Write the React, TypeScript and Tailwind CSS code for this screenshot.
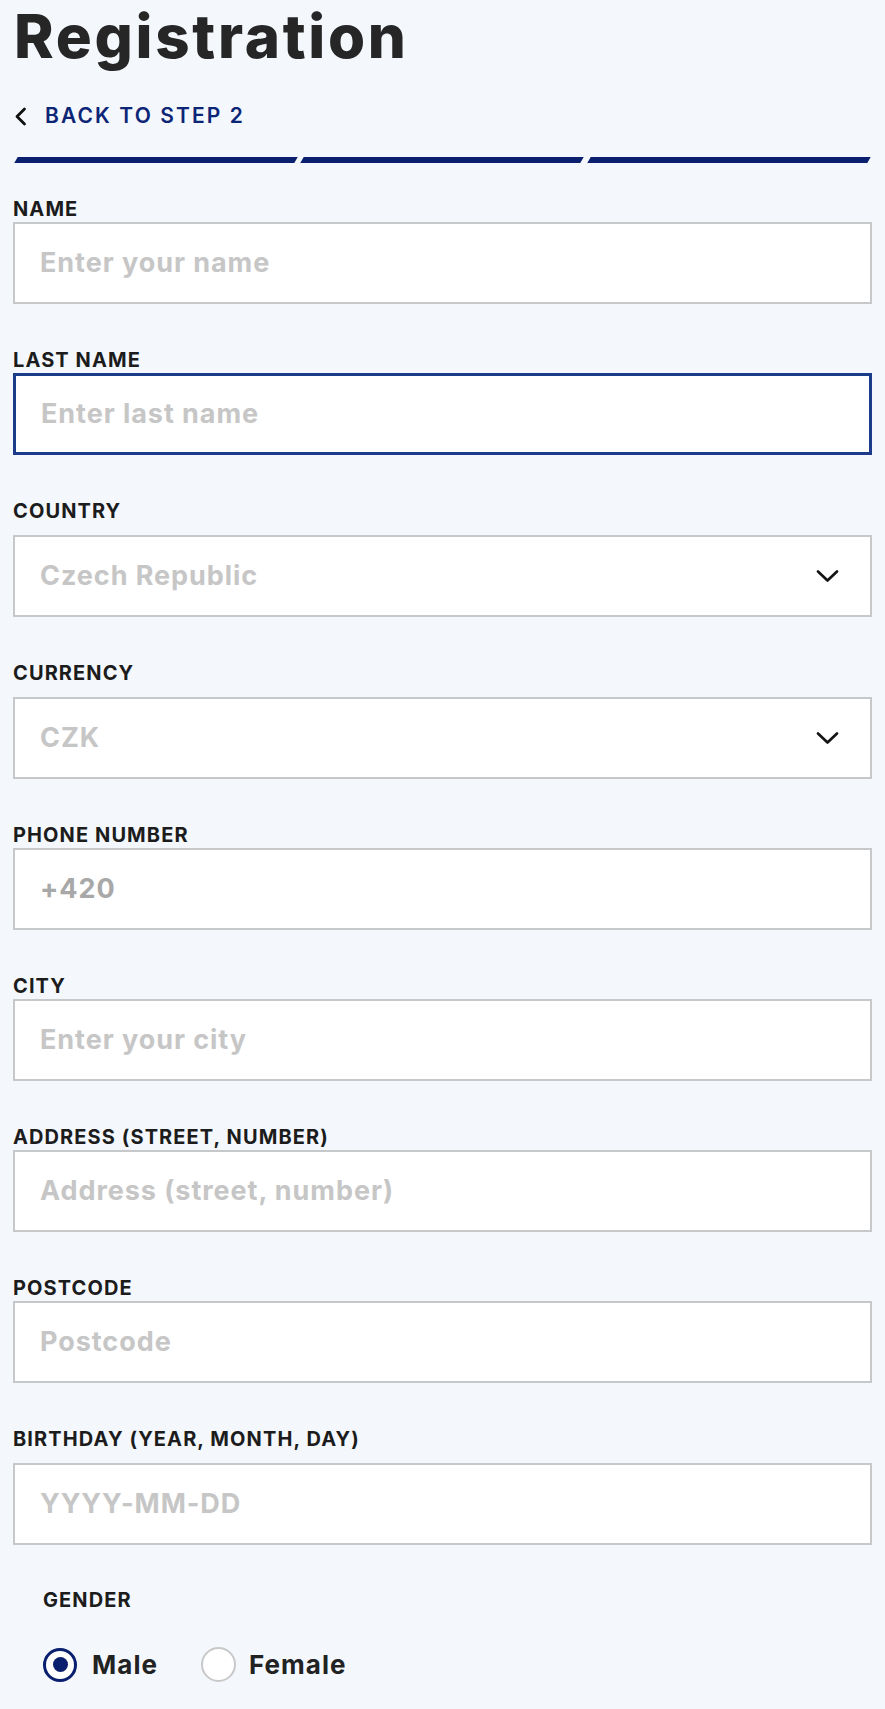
import { useState } from "react";

type Field = {
  label: string;
  placeholder?: string;
  value?: string;
  select?: boolean;
  wide?: boolean;
  active?: boolean;
};

const fields: Field[] = [
  { label: "Name", placeholder: "Enter your name" },
  { label: "Last name", placeholder: "Enter last name", active: true },
  { label: "Country", value: "Czech Republic", select: true },
  { label: "Currency", value: "CZK", select: true },
  { label: "Phone number", value: "+420" },
  { label: "City", placeholder: "Enter your city" },
  { label: "Address (street, number)", placeholder: "Address (street, number)" },
  { label: "Postcode", placeholder: "Postcode" },
  { label: "Birthday (year, month, day)", placeholder: "YYYY-MM-DD", wide: true },
];

function Chevron() {
  return (
    <svg width="23" height="14" viewBox="0 0 23 14" fill="none">
      <polyline points="2,2.5 11.5,11.5 21,2.5" stroke="#151515" strokeWidth="2.7" strokeLinecap="round" strokeLinejoin="round" />
    </svg>
  );
}

function FormField({ f }: { f: Field }) {
  const spaced = f.select || f.wide;
  return (
    <div className="flex flex-col">
      <label className="h-5 text-[20px] leading-5 font-bold uppercase text-[#1c1c1c] tracking-[0.055em]">{f.label}</label>
      <div
        className={`${spaced ? "mt-[14px]" : "mt-[3px]"} h-[82px] bg-white flex items-center pl-[25px] pr-[31px] ${
          f.active ? "border-[3px] border-[#1c3b8a]" : "border-2 border-[#c6c8ca]"
        }`}
      >
        {f.select ? (
          <>
            <span className="flex-1 text-[27px] font-bold text-[#c6c6c6] tracking-[0.035em]">{f.value}</span>
            <Chevron />
          </>
        ) : (
          <input
            readOnly
            defaultValue={f.value}
            placeholder={f.placeholder}
            className="w-full bg-transparent outline-none text-[27px] font-bold tracking-[0.035em] text-[#a8a8a8] placeholder:text-[#c6c6c6]"
          />
        )}
      </div>
    </div>
  );
}

export default function App() {
  const [gender, setGender] = useState("male");

  return (
    <div className="min-h-[1709px] bg-[#f4f8fc] font-['Inter',sans-serif] px-[13px] pt-[6px] pb-10">
      {/* Title */}
      <h1 className="text-[60px] leading-[60px] font-extrabold text-[#262626] pl-[1px] tracking-[0.045em]">Registration</h1>

      {/* Back link */}
      <div className="mt-[38px] flex items-center h-6">
        <svg width="13" height="19" viewBox="0 0 13 19" fill="none" className="ml-[1px]">
          <polyline points="10.5,2 3,9.5 10.5,17" stroke="#111" strokeWidth="2.8" strokeLinecap="round" strokeLinejoin="round" />
        </svg>
        <span className="ml-[18px] text-[21px] font-semibold text-[#0c2577] tracking-[0.1em]">BACK TO STEP 2</span>
      </div>

      {/* Steps */}
      <div className="mt-[29px] flex gap-[6px] px-[3px]">
        <div className="h-[6px] flex-1 bg-[#0a1f6e] -skew-x-[30deg]" />
        <div className="h-[6px] flex-1 bg-[#0a1f6e] -skew-x-[30deg]" />
        <div className="h-[6px] flex-1 bg-[#0a1f6e] -skew-x-[30deg]" />
      </div>

      {/* Fields */}
      <div className="mt-[36px] flex flex-col gap-[46px]">
        {fields.map((f) => (
          <FormField key={f.label} f={f} />
        ))}
      </div>

      {/* Gender */}
      <div className="mt-[45px] pl-[30px]">
        <div className="h-5 text-[20px] leading-5 font-bold uppercase text-[#1c1c1c] tracking-[0.055em]">Gender</div>
        <div className="mt-[35px] flex items-center">
          <button onClick={() => setGender("male")} className="flex items-center">
            <span
              className={`w-[34px] h-[34px] rounded-full flex items-center justify-center bg-white ${
                gender === "male" ? "border-[3px] border-[#0a1f6e]" : "border-2 border-[#c8c8c8]"
              }`}
            >
              {gender === "male" && <span className="w-[15px] h-[15px] rounded-full bg-[#0a1f6e]" />}
            </span>
            <span className="ml-[15px] text-[26px] font-bold text-[#222] tracking-[0.04em]">Male</span>
          </button>
          <button onClick={() => setGender("female")} className="ml-[43px] flex items-center">
            <span
              className={`w-[35px] h-[35px] rounded-full flex items-center justify-center bg-white ${
                gender === "female" ? "border-[3px] border-[#0a1f6e]" : "border-2 border-[#c8c8c8]"
              }`}
            >
              {gender === "female" && <span className="w-[15px] h-[15px] rounded-full bg-[#0a1f6e]" />}
            </span>
            <span className="ml-[13px] text-[26px] font-bold text-[#222] tracking-[0.04em]">Female</span>
          </button>
        </div>
      </div>
    </div>
  );
}
